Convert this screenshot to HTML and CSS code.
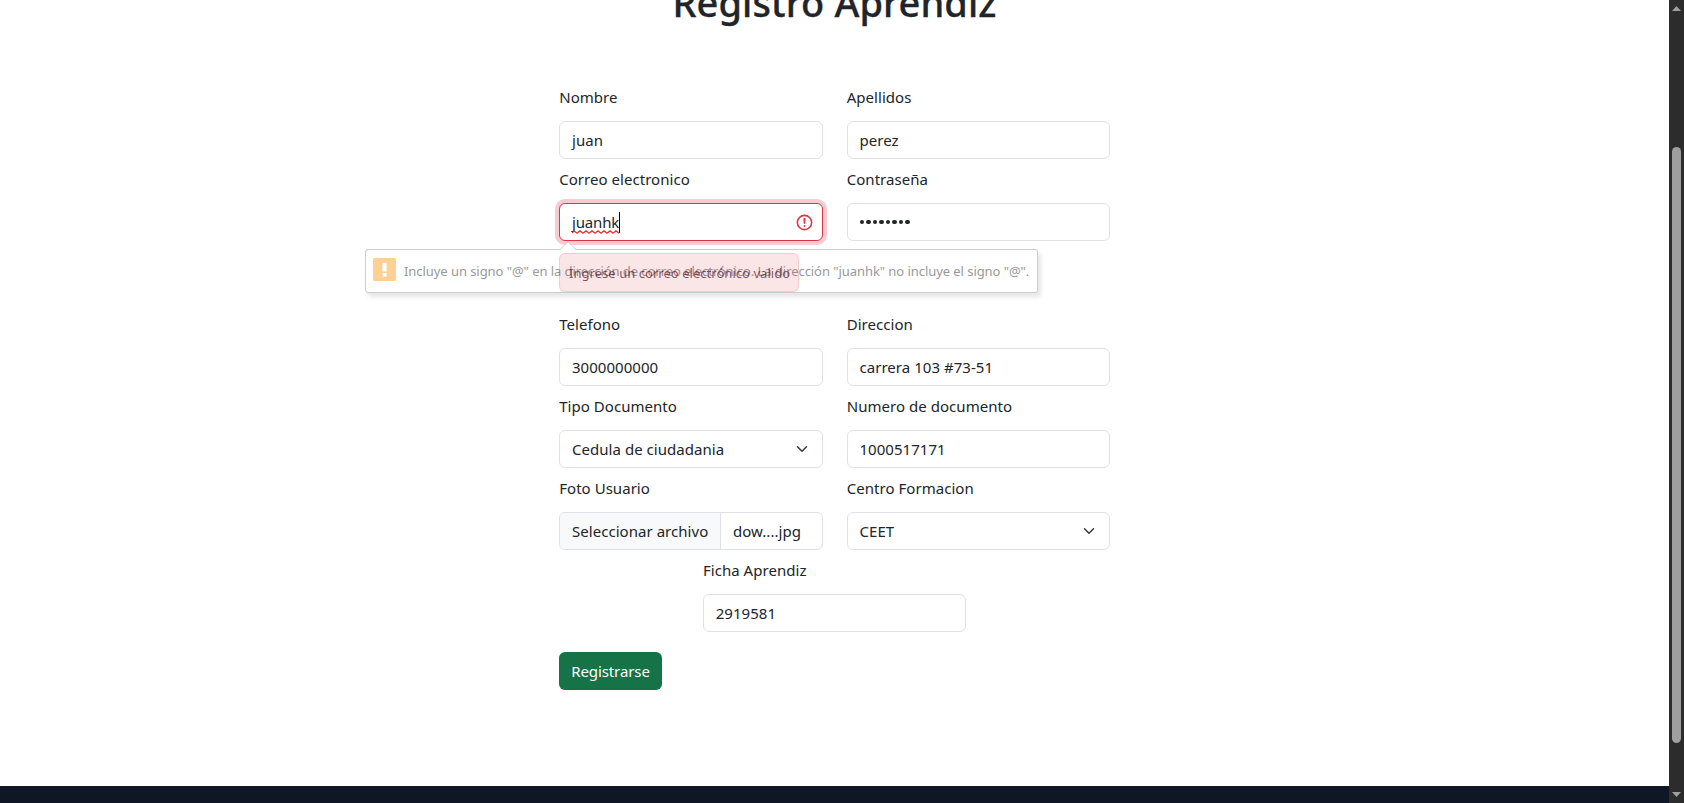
FILE: index.html
```html
<!DOCTYPE html>
<html lang="es">
<head>
<meta charset="utf-8">
<title>Registro Aprendiz</title>
<link rel="stylesheet" href="styles.css">
</head>
<body>
<div class="window">
  <div class="page">
    <main class="content">
      <h1 class="title">Registro Aprendiz</h1>
      <form class="form">
        <div class="row">
          <div class="field"><label class="label">Nombre</label><div class="control">juan</div></div>
          <div class="field"><label class="label">Apellidos</label><div class="control">perez</div></div>
        </div>
        <div class="row row-feedback">
          <div class="field">
            <label class="label">Correo electronico</label>
            <div class="control invalid">
              <span class="misspelled">juanhk<svg class="squiggle" viewBox="0 0 48 4"><path d="M0 3.2 L2 .8 L5 3.2 L8 .8 L11 3.2 L14 .8 L17 3.2 L20 .8 L23 3.2 L26 .8 L29 3.2 L32 .8 L35 3.2 L38 .8 L41 3.2 L44 .8 L47 3.2"/></svg></span><i class="caret"></i>
              <svg class="error-icon" viewBox="0 0 12 12"><circle cx="6" cy="6" r="4.5"/><path d="M5.8 3.6h.4L6 6.5z"/><circle class="dot" cx="6" cy="8.2" r=".6"/></svg>
            </div>
            <div class="feedback">Ingrese un correo electrónico valido</div>
            <div class="bubble">
              <svg class="arrow" viewBox="0 0 16 9"><path class="arrow-fill" d="M0 9 L8 1 L16 9Z"/><path class="arrow-line" d="M0 8.5 L8 .7 L16 8.5"/></svg>
              <svg class="warn" viewBox="0 0 23 23"><rect width="23" height="23" rx="1.5"/><path d="M9.4 5h4.2v8.5H9.4zM9.4 15h4.2v3.5H9.4z"/></svg>
              <span class="bubble-text">Incluye un signo "@" en la dirección de correo electrónico. La dirección "juanhk" no incluye el signo "@".</span>
            </div>
          </div>
          <div class="field"><label class="label">Contraseña</label><div class="control password"><i></i><i></i><i></i><i></i><i></i><i></i><i></i><i></i></div></div>
        </div>
        <div class="row">
          <div class="field"><label class="label">Telefono</label><div class="control">3000000000</div></div>
          <div class="field"><label class="label">Direccion</label><div class="control">carrera 103 #73-51</div></div>
        </div>
        <div class="row">
          <div class="field"><label class="label">Tipo Documento</label><div class="control select">Cedula de ciudadania<svg class="chevron" viewBox="0 0 16 16"><path d="m2 5 6 6 6-6"/></svg></div></div>
          <div class="field"><label class="label">Numero de documento</label><div class="control">1000517171</div></div>
        </div>
        <div class="row">
          <div class="field"><label class="label">Foto Usuario</label><div class="control file"><span class="file-button">Seleccionar archivo</span><span class="file-name">dow....jpg</span></div></div>
          <div class="field"><label class="label">Centro Formacion</label><div class="control select">CEET<svg class="chevron" viewBox="0 0 16 16"><path d="m2 5 6 6 6-6"/></svg></div></div>
        </div>
        <div class="row">
          <div class="field"><label class="label">Ficha Aprendiz</label><div class="control">2919581</div></div>
        </div>
        <button class="submit" type="button">Registrarse</button>
      </form>
    </main>
    <footer class="footer"></footer>
  </div>
  <div class="scrollbar">
    <svg class="scroll-arrow" viewBox="0 0 9 5"><path d="M0 5 4.5 0 9 5z"/></svg>
    <div class="thumb"></div>
    <svg class="scroll-arrow down" viewBox="0 0 9 5"><path d="M0 0 4.5 5 9 0z"/></svg>
  </div>
</div>
</body>
</html>
```
FILE: styles.css
```css
* { box-sizing: border-box; }
body {
  margin: 0;
  overflow: hidden;
  background: #fff;
  color: #212529;
  font-family: "Noto Sans", "Open Sans", sans-serif;
  font-size: 15px;
  line-height: 24px;
  letter-spacing: .04px;
}
.window { display: flex; height: 803px; overflow: hidden; }
.page { flex: 1; display: flex; flex-direction: column; }
.content { flex: 1; display: flex; flex-direction: column; align-items: center; }
.title {
  margin: -22px 0 59px;
  font-size: 38px;
  font-weight: 500;
  letter-spacing: .1px;
  line-height: 48px;
  white-space: nowrap;
  -webkit-text-stroke: .3px #212529;
}
.form { width: 551px; }
.row { display: flex; justify-content: center; gap: 24px; margin-bottom: 8px; }
.row-feedback { margin-bottom: 71px; }
.field { position: relative; width: 263.5px; }
.label { display: block; margin-bottom: 12px; padding-left: .2px; white-space: nowrap; }
.control {
  display: flex;
  align-items: center;
  height: 38px;
  padding: 0 12px;
  border: 1px solid #dee2e6;
  border-radius: 6px;
  background: #fff;
  white-space: nowrap;
}
.invalid { border-color: #dc3545; box-shadow: 0 0 0 4px rgba(220, 53, 69, .25); }
.misspelled { position: relative; letter-spacing: -.15px; }
.squiggle { position: absolute; left: 0; bottom: 0; width: 48px; height: 4px; fill: none; stroke: #f22; stroke-width: 1.1; }
.caret { width: 1px; height: 21px; background: #000; }
.error-icon { width: 19px; height: 19px; margin-left: auto; margin-right: -4px; fill: none; stroke: #dc3545; stroke-linejoin: round; }
.error-icon .dot { fill: #dc3545; stroke: none; }
.password { gap: 2.1px; padding-left: 12.5px; }
.password i { width: 4.4px; height: 4.4px; border-radius: 50%; background: #212529; }
.select { justify-content: space-between; }
.chevron { width: 16px; height: 12px; fill: none; stroke: #343a40; stroke-width: 2; stroke-linecap: round; stroke-linejoin: round; }
.file { padding: 0; overflow: hidden; }
.file-button {
  flex: none;
  width: 161px;
  height: 36px;
  padding: 6px 0 6px 12px;
  border-right: 1px solid #dee2e6;
  background: #f8f9fa;
}
.file-name { padding-left: 12px; }
.feedback {
  position: absolute;
  z-index: 2;
  left: 0;
  top: 86px;
  width: 240px;
  height: 39px;
  padding: 8px 9px;
  border: 1px solid rgba(220, 53, 69, .15);
  border-radius: 6px;
  background: rgba(220, 53, 69, .13);
  color: rgba(70, 15, 30, .7);
  font-size: 13px;
  line-height: 22px;
  white-space: nowrap;
}
.bubble {
  position: absolute;
  z-index: 1;
  left: -194px;
  top: 82px;
  width: 673px;
  height: 44px;
  padding: 0 7px;
  display: flex;
  align-items: center;
  border: 1px solid #ccc;
  border-radius: 3px;
  background: #fff;
  box-shadow: 3px 4px 4px rgba(0, 0, 0, .1);
  color: #999;
  font-size: 13px;
  letter-spacing: -.06px;
  white-space: nowrap;
}
.arrow { position: absolute; left: 194px; top: -9px; width: 16px; height: 9px; }
.arrow-fill { fill: #fff; }
.arrow-line { fill: none; stroke: #ccc; }
.warn { flex: none; width: 23px; height: 23px; margin: 0 8px 3px 0; fill: #ffd096; }
.warn path { fill: #fff; }
.submit {
  height: 38px;
  width: 103px;
  margin-top: 12px;
  padding: 0;
  border: 0;
  border-radius: 6px;
  background: #157347;
  color: #fff;
  font: inherit;
  letter-spacing: -.1px;
}
.footer { height: 17px; background: #0f1726; }
.scrollbar { width: 15px; display: flex; flex-direction: column; align-items: center; background: #2c2c2c; padding: 6px 0; }
.scroll-arrow { width: 9px; height: 5px; fill: #9f9f9f; }
.scroll-arrow.down { margin-top: auto; }
.thumb { width: 9px; height: 596px; margin-top: 136px; border-radius: 5px; background: #9f9f9f; }
```
